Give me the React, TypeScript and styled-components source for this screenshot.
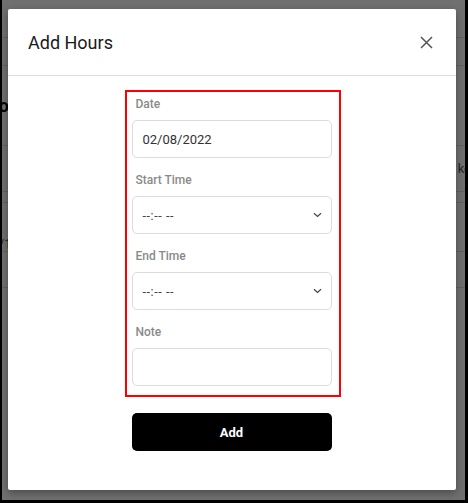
import React from "react";
import styled, { createGlobalStyle } from "styled-components";

const Global = createGlobalStyle`
  * { box-sizing: border-box; }
  html, body { margin: 0; padding: 0; background: #000; }
  body { font-family: Roboto, "Noto Sans", Arial, sans-serif; }
`;

const Frame = styled.div`
  position: relative;
  width: 468px;
  height: 503px;
  border-left: 2px solid #000;
  border-right: 3px solid #000;
  border-bottom: 3px solid #000;
  background: #fff;
  overflow: hidden;
`;

/* Page sitting underneath the dialog */
const Page = styled.div`
  display: flex;
  flex-direction: column;
  height: 100%;
`;

const PageRow = styled.div<{ $h: number; $align?: string }>`
  flex: none;
  height: ${(p) => p.$h}px;
  border-bottom: 1px solid #dcdcdc;
  display: flex;
  align-items: ${(p) => p.$align ?? "center"};
  justify-content: space-between;
  font-size: 13px;
  color: #555;
`;

const PageTitle = styled.span`
  font-size: 18px;
  font-weight: 700;
  color: #000;
  margin-left: -25px;
`;

const EdgeText = styled.span<{ $shift: number }>`
  margin: 0 ${(p) => p.$shift}px;
`;

/* Dimmed backdrop with the dialog */
const Backdrop = styled.div`
  position: absolute;
  inset: 0;
  background: rgba(0, 0, 0, 0.56);
  padding: 9px 9px 10px 6px;
  display: flex;
  align-items: flex-start;
`;

const Dialog = styled.div`
  width: 448px;
  height: 481px;
  background: #fff;
  border-radius: 2px;
  box-shadow: 0 3px 8px rgba(0, 0, 0, 0.35);
  display: flex;
  flex-direction: column;
`;

const Header = styled.div`
  height: 67px;
  border-bottom: 1px solid #dedede;
  display: flex;
  align-items: center;
  justify-content: space-between;
  padding: 0 23px 0 20px;
`;

const Title = styled.h5`
  margin: 0;
  font-size: 18px;
  font-weight: 400;
  color: #1a1a1a;
  line-height: 1;
  padding-top: 1px;
`;

const CloseButton = styled.button`
  border: 0;
  background: none;
  padding: 0;
  width: 14px;
  height: 14px;
  display: flex;
  align-items: center;
  justify-content: center;
  cursor: pointer;
`;

const Body = styled.div`
  display: flex;
  flex-direction: column;
  align-items: center;
  padding-top: 14px;
`;

const FieldBox = styled.div`
  width: 216px;
  border: 2px solid #ff0000;
  padding: 3px 7px 9px 5px;
  display: flex;
  flex-direction: column;
  gap: 13px;
  margin-left: 1px;
`;

const Group = styled.div`
  display: flex;
  flex-direction: column;
`;

const Label = styled.label`
  font-size: 12px;
  line-height: 18px;
  font-weight: 500;
  color: #8a8a8a;
  padding-left: 4px;
  margin-bottom: 7px;
`;

const TextInput = styled.input`
  width: 200px;
  height: 38px;
  border: 1px solid #dcdcdc;
  border-radius: 5px;
  padding: 0 10px;
  font-family: Roboto, Arial, sans-serif;
  font-size: 13px;
  color: #333;
  outline: none;
  background: #fff;
`;

const TimeSelect = styled.div`
  width: 200px;
  height: 38px;
  border: 1px solid #dcdcdc;
  border-radius: 5px;
  padding: 0 9px 0 10px;
  display: flex;
  align-items: center;
  justify-content: space-between;
  font-size: 12.5px;
  letter-spacing: 0.6px;
  color: #444;
`;

const SubmitButton = styled.button`
  margin-top: 16px;
  width: 200px;
  height: 38px;
  border: 0;
  border-radius: 5px;
  background: #000;
  color: #fff;
  font-family: Roboto, Arial, sans-serif;
  font-size: 13px;
  font-weight: 700;
  cursor: pointer;
  margin-right: 1px;
`;

const Chevron = () => (
  <svg width="9" height="6" viewBox="0 0 9 6" fill="none">
    <path d="M1 1.2 L4.5 4.5 L8 1.2" stroke="#444" strokeWidth="1.2" />
  </svg>
);

const CloseIcon = () => (
  <svg width="13" height="13" viewBox="0 0 13 13" fill="none">
    <path d="M1 1 L12 12 M12 1 L1 12" stroke="#555" strokeWidth="1.5" />
  </svg>
);

const TimeField = ({ label }: { label: string }) => (
  <Group>
    <Label>{label}</Label>
    <TimeSelect>
      <span>--:-- --</span>
      <Chevron />
    </TimeSelect>
  </Group>
);

export default function App() {
  return (
    <>
      <Global />
      <Frame>
        <Page>
          <PageRow $h={38} />
          <PageRow $h={28} />
          <PageRow $h={80}>
            <PageTitle>Info</PageTitle>
          </PageRow>
          <PageRow $h={46}>
            <span />
            <EdgeText $shift={-6}>ke</EdgeText>
          </PageRow>
          <PageRow $h={11} />
          <PageRow $h={49} $align="flex-end">
            <EdgeText $shift={-3}>/1</EdgeText>
          </PageRow>
          <PageRow $h={36} />
        </Page>
        <Backdrop>
          <Dialog>
            <Header>
              <Title>Add Hours</Title>
              <CloseButton aria-label="Close">
                <CloseIcon />
              </CloseButton>
            </Header>
            <Body>
              <FieldBox>
                <Group>
                  <Label>Date</Label>
                  <TextInput readOnly value="02/08/2022" />
                </Group>
                <TimeField label="Start Time" />
                <TimeField label="End Time" />
                <Group>
                  <Label>Note</Label>
                  <TextInput readOnly value="" />
                </Group>
              </FieldBox>
              <SubmitButton>Add</SubmitButton>
            </Body>
          </Dialog>
        </Backdrop>
      </Frame>
    </>
  );
}
